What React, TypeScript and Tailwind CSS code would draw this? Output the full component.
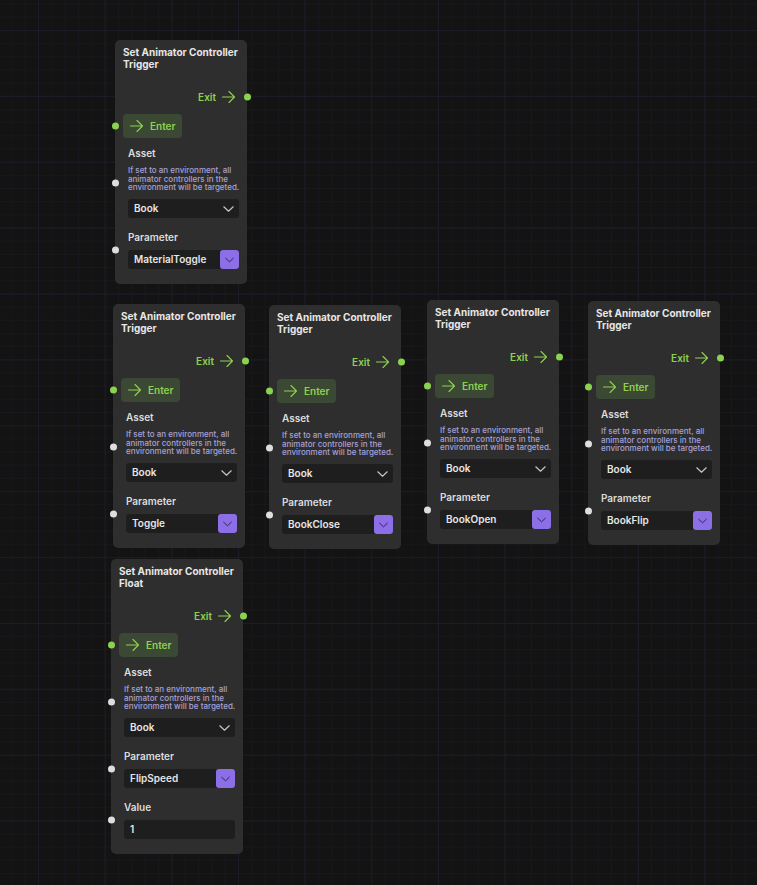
import React from 'react';

interface NodeData {
  pos: string;
  kind: string;
  param: string;
  value?: string;
}

const nodes: NodeData[] = [
  { pos: 'left-[115px] top-[40px]', kind: 'Trigger', param: 'MaterialToggle' },
  { pos: 'left-[113px] top-[304px]', kind: 'Trigger', param: 'Toggle' },
  { pos: 'left-[269px] top-[305px]', kind: 'Trigger', param: 'BookClose' },
  { pos: 'left-[427px] top-[300px]', kind: 'Trigger', param: 'BookOpen' },
  { pos: 'left-[588px] top-[301px]', kind: 'Trigger', param: 'BookFlip' },
  { pos: 'left-[111px] top-[559px]', kind: 'Float', param: 'FlipSpeed', value: '1' },
];

const Arrow = () => (
  <svg width="13" height="12" viewBox="0 0 13 12" fill="none" stroke="#8fd14f" strokeWidth="1.1" strokeLinecap="round" strokeLinejoin="round">
    <path d="M0.5 6h12M7 0.5l5.5 5.5L7 11.5" />
  </svg>
);

const Chevron = ({ color, w = 11 }: { color: string; w?: number }) => (
  <svg width={w} height="6" viewBox="0 0 11 6" fill="none" stroke={color} strokeWidth="1.2" strokeLinecap="round" strokeLinejoin="round">
    <path d="M0.8 0.8L5.5 5.2L10.2 0.8" />
  </svg>
);

const Dot = ({ side, green }: { side: 'left' | 'right'; green?: boolean }) => (
  <span
    className={`absolute top-1/2 h-[7px] w-[7px] -translate-y-1/2 rounded-full ${
      side === 'left' ? 'left-[-3.5px]' : 'right-[-3.5px]'
    } ${green ? 'bg-[#8bd34e]' : 'bg-[#dedede]'}`}
  />
);

const Label = ({ children }: { children: React.ReactNode }) => (
  <div className="text-[10px] leading-[12px] font-semibold text-[#dcdcdc]">{children}</div>
);

const FlowNode = ({ node }: { node: NodeData }) => (
  <div className={`absolute ${node.pos} w-[132px] rounded-[5px] bg-[#2e2e2e] pt-[6px] pb-[15px]`}>
    <div className="px-2 text-[10px] leading-[12px] font-bold text-[#e6e6e6] whitespace-nowrap">
      <div>Set Animator Controller</div>
      <div>{node.kind}</div>
    </div>

    <div className="relative mt-[20px] flex h-[14px] items-center justify-end gap-[6px] pr-[12px]">
      <span className="text-[10px] font-semibold text-[#8fd14f]">Exit</span>
      <Arrow />
      <Dot side="right" green />
    </div>

    <div className="relative mt-[10px] h-6">
      <Dot side="left" green />
      <div className="ml-2 inline-flex h-6 items-center gap-[7px] rounded-[4px] bg-[#3a4834] pl-[7px] pr-[6px]">
        <Arrow />
        <span className="text-[10px] font-semibold text-[#8fd14f]">Enter</span>
      </div>
    </div>

    <div className="relative mt-[9px] pl-[13px] pr-[8px]">
      <Dot side="left" />
      <Label>Asset</Label>
      <div className="mt-[7px] text-[8px] leading-[8.7px] font-medium text-[#a8a1d8] whitespace-nowrap">
        <div>If set to an environment, all</div>
        <div>animator controllers in the</div>
        <div>environment will be targeted.</div>
      </div>
      <div className="mt-[7px] flex h-[19px] items-center justify-between rounded-[3px] bg-[#1e1e1e] pl-[6px] pr-[5px]">
        <span className="text-[10px] font-semibold text-[#e6e6e6]">Book</span>
        <Chevron color="#c4c4c4" />
      </div>
    </div>

    <div className="relative mt-[13px] pl-[13px] pr-[8px]">
      <Dot side="left" />
      <Label>Parameter</Label>
      <div className="mt-[7px] flex h-[19px] rounded-[3px] bg-[#1e1e1e]">
        <span className="flex flex-1 items-center pl-[6px] text-[10px] font-semibold text-[#e6e6e6]">{node.param}</span>
        <span className="flex w-[19px] items-center justify-center rounded-[3px] bg-[#8c6fe6]">
          <Chevron color="#2f2458" w={9} />
        </span>
      </div>
    </div>

    {node.value && (
      <div className="relative mt-[13px] pl-[13px] pr-[8px]">
        <Dot side="left" />
        <Label>Value</Label>
        <div className="mt-[7px] flex h-[19px] items-center rounded-[3px] bg-[#1e1e1e] pl-[6px] text-[10px] font-semibold text-[#e6e6e6]">
          {node.value}
        </div>
      </div>
    )}
  </div>
);

export default function App() {
  return (
    <div
      className="relative h-[885px] w-[757px] overflow-hidden bg-[#131313] bg-[linear-gradient(to_right,#1d1b27_1px,transparent_1px),linear-gradient(to_bottom,#1d1b27_1px,transparent_1px),linear-gradient(to_right,#18171d_1px,transparent_1px),linear-gradient(to_bottom,#18171d_1px,transparent_1px)] bg-[size:66.67px_65.9px,66.67px_65.9px,13.33px_13.18px,13.33px_13.18px] bg-[position:38px_30px,38px_30px,38px_30px,38px_30px] font-['Inter','Noto_Sans',sans-serif]"
    >
      {nodes.map((n, i) => (
        <FlowNode key={i} node={n} />
      ))}
    </div>
  );
}
